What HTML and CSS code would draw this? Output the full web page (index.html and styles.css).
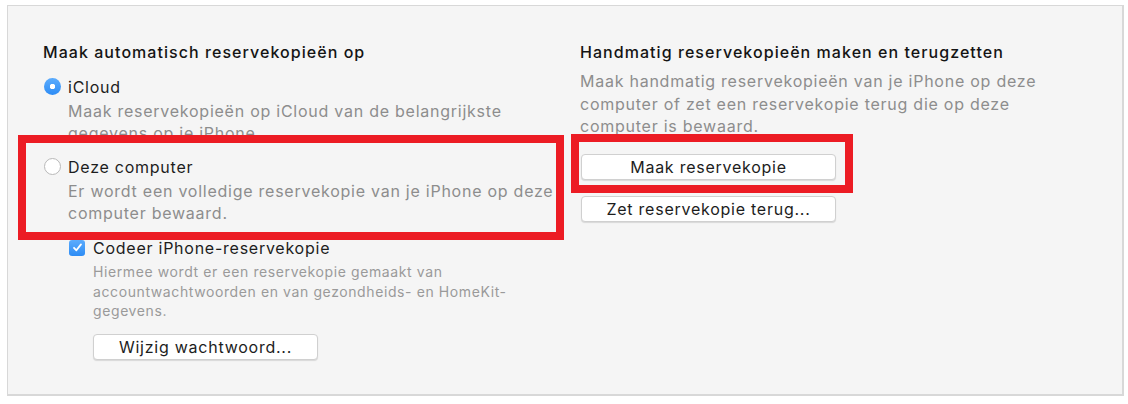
FILE: index.html
```html
<!DOCTYPE html>
<html lang="nl">
<head>
  <meta charset="UTF-8">
  <meta name="viewport" content="width=device-width, initial-scale=1.0">
  <title>Reservekopieën</title>

  <link rel="stylesheet" href="styles.css">
</head>

<body>
  <div class="panel">
    <div class="columns">
      <!-- Automatisch -->
      <section class="column">
        <h2>Maak automatisch reservekopieën op</h2>

        <div class="option first">
          <span class="radio checked"></span>
          <span class="label">iCloud</span>
        </div>
        <p class="description">Maak reservekopieën op iCloud van de belangrijkste<br>gegevens op je iPhone.</p>

        <div class="option">
          <span class="radio"></span>
          <span class="label">Deze computer</span>
        </div>
        <p class="description">Er wordt een volledige reservekopie van je iPhone op deze<br>computer bewaard.</p>

        <div class="sub-options">
          <div class="option">
            <span class="checkbox">
              <svg width="11" height="11" viewBox="0 0 11 11"><path d="M2 5.8 L4.4 8.3 L9 2.4" fill="none" stroke="#fff" stroke-width="1.8" stroke-linecap="round" stroke-linejoin="round"/></svg>
            </span>
            <span class="label">Codeer iPhone-reservekopie</span>
          </div>
          <p class="small">Hiermee wordt er een reservekopie gemaakt van<br>accountwachtwoorden en van gezondheids- en HomeKit-<br>gegevens.</p>
          <button class="button wide-sm">Wijzig wachtwoord...</button>
        </div>
      </section>

      <!-- Handmatig -->
      <section class="column">
        <h2>Handmatig reservekopieën maken en terugzetten</h2>
        <p class="description manual">Maak handmatig reservekopieën van je iPhone op deze<br>computer of zet een reservekopie terug die op deze<br>computer is bewaard.</p>

        <div class="actions">
          <button class="button">Maak reservekopie</button>
          <button class="button">Zet reservekopie terug...</button>
        </div>
      </section>
    </div>

    <!-- rode markeringen uit de handleiding -->
    <div class="highlight highlight-left"></div>
    <div class="highlight highlight-right"></div>
  </div>
</body>
</html>
```

FILE: styles.css
```css
/* Some resets */
* {
  box-sizing: border-box;
  margin: 0;
  padding: 0;
}

body {
  background: #fff;
  font-family: Inter, Roboto, "Liberation Sans", sans-serif;
  letter-spacing: 0.75px;
  color: #1d1d1d;
}

/* Grey preferences box */
.panel {
  position: relative;
  margin: 5px 0 0 7px;
  width: 1117px;
  height: 391px;
  background: #f5f5f5;
  border: 1px solid #d8d8d8;
  border-right-width: 2px;
  border-bottom-width: 2px;
}

.columns {
  display: grid;
  grid-template-columns: 537px 1fr;
  padding: 36px 0 0 35px;
}

h2 {
  font-size: 16px;
  font-weight: 500;
  letter-spacing: 1.05px;
  line-height: 20px;
  color: #141414;
}

/* Radio and checkbox rows */
.option {
  display: flex;
  align-items: center;
  gap: 7px;
  height: 21px;
  font-size: 16px;
  margin-top: 12px;
}

.option.first {
  margin-top: 14px;
}

.radio {
  width: 17px;
  height: 17px;
  border-radius: 50%;
  background: #fff;
  border: 1px solid #b9b9b9;
  margin-left: 1px;
  flex: none;
}

.radio.checked {
  border: none;
  background: radial-gradient(circle, #fff 0 2.5px, transparent 3px),
              linear-gradient(#5cacfd, #2d8cf5);
}

.checkbox {
  width: 16px;
  height: 16px;
  border-radius: 3px;
  background: linear-gradient(#5cacfd, #2d8cf5);
  display: flex;
  align-items: center;
  justify-content: center;
  flex: none;
}

.description {
  margin: 4px 0 0 25px;
  font-size: 16px;
  line-height: 21.5px;
  color: #8d8d8d;
}

.description.manual {
  margin: 8px 0 0 0;
  line-height: 22.5px;
}

.sub-options {
  margin-left: 26px;
}

.sub-options .option {
  margin-top: 13px;
  gap: 8px;
}

.small {
  margin: 4px 0 0 24px;
  font-size: 14px;
  letter-spacing: 0.6px;
  line-height: 19.5px;
  color: #9a9a9a;
}

/* Push buttons */
.button {
  display: block;
  width: 255px;
  height: 26px;
  font-family: inherit;
  font-size: 16px;
  letter-spacing: inherit;
  color: #1d1d1d;
  background: #fff;
  border: 1px solid #d0d0d0;
  border-radius: 4px;
  box-shadow: 0 1px 1px rgba(0, 0, 0, 0.12);
}

.button.wide-sm {
  width: 225px;
  margin: 13px 0 0 24px;
}

.actions {
  display: flex;
  flex-direction: column;
  gap: 16px;
  margin: 16px 0 0 1px;
}

/* Red annotation frames */
.highlight {
  position: absolute;
  border: 8px solid #ec1c24;
}

.highlight-left {
  left: 10px;
  top: 129px;
  width: 546px;
  height: 105px;
}

.highlight-right {
  left: 563px;
  top: 128px;
  width: 282px;
  height: 59px;
}
```
